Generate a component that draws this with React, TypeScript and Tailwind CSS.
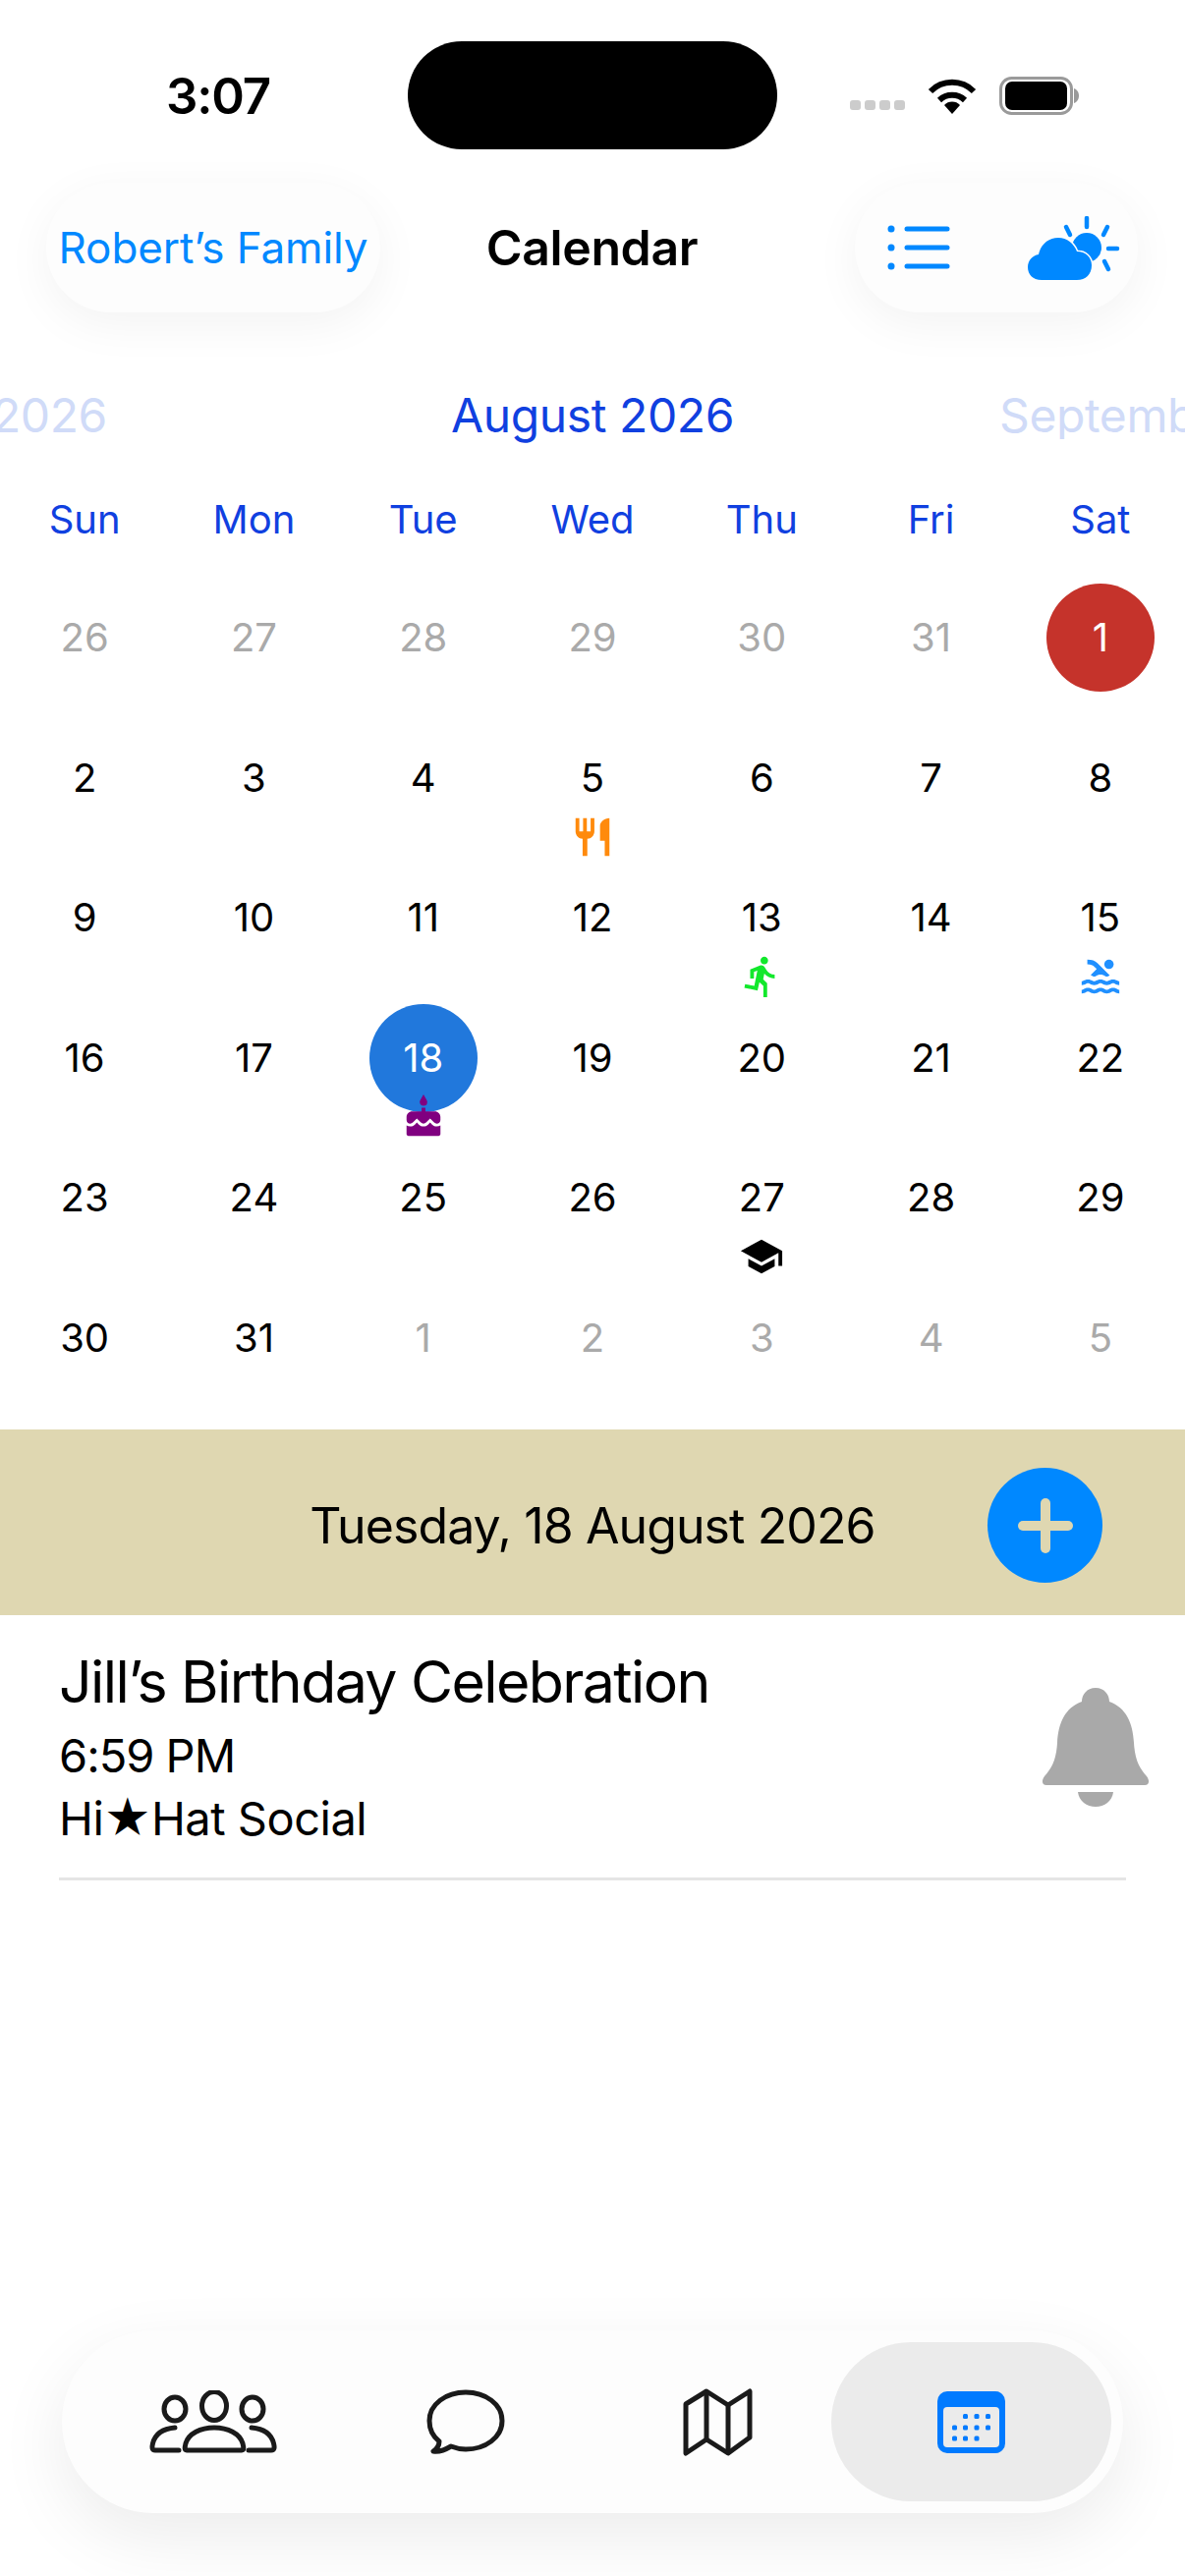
import { MdCake, MdDirectionsRun, MdPool, MdRestaurant, MdSchool } from "react-icons/md";
import type { ReactNode } from "react";

type Day = {
  label: number;
  muted?: boolean;
  circle?: "red" | "blue";
  icon?: ReactNode;
};

const weekdays = ["Sun", "Mon", "Tue", "Wed", "Thu", "Fri", "Sat"];

const days: Day[] = [
  { label: 26, muted: true },
  { label: 27, muted: true },
  { label: 28, muted: true },
  { label: 29, muted: true },
  { label: 30, muted: true },
  { label: 31, muted: true },
  { label: 1, circle: "red" },
  { label: 2 },
  { label: 3 },
  { label: 4 },
  { label: 5, icon: <MdRestaurant className="h-[46px] w-[46px] text-[#ff8a0c]" /> },
  { label: 6 },
  { label: 7 },
  { label: 8 },
  { label: 9 },
  { label: 10 },
  { label: 11 },
  { label: 12 },
  { label: 13, icon: <MdDirectionsRun className="h-[46px] w-[46px] text-[#12e82c]" /> },
  { label: 14 },
  { label: 15, icon: <MdPool className="h-[46px] w-[46px] text-[#2090ff]" /> },
  { label: 16 },
  { label: 17 },
  { label: 18, circle: "blue", icon: <MdCake className="h-[46px] w-[46px] text-[#800080]" /> },
  { label: 19 },
  { label: 20 },
  { label: 21 },
  { label: 22 },
  { label: 23 },
  { label: 24 },
  { label: 25 },
  { label: 26 },
  { label: 27, icon: <MdSchool className="h-[46px] w-[46px] text-black" /> },
  { label: 28 },
  { label: 29 },
  { label: 30 },
  { label: 31 },
  { label: 1, muted: true },
  { label: 2, muted: true },
  { label: 3, muted: true },
  { label: 4, muted: true },
  { label: 5, muted: true },
];

function StatusBar() {
  return (
    <div className="grid h-[110px] grid-cols-[1fr_376px_1fr] items-center mt-[42px]">
      <div className="pl-[169px] text-[51px] font-semibold leading-none tracking-[-1.2px] text-black">3:07</div>
      <div className="h-[110px] rounded-[55px] bg-black" />
      <div className="flex items-center pl-[74px]">
        <div className="mt-[20px] flex gap-[4px]">
          <span className="h-[10px] w-[11px] rounded-[3px] bg-[#cccccc]" />
          <span className="h-[10px] w-[11px] rounded-[3px] bg-[#cccccc]" />
          <span className="h-[10px] w-[11px] rounded-[3px] bg-[#cccccc]" />
          <span className="h-[10px] w-[11px] rounded-[3px] bg-[#cccccc]" />
        </div>
        <svg className="ml-[23px] h-[37px] w-[50px]" viewBox="0 0 50 37" fill="none" stroke="black" strokeWidth="6">
          <path d="M3 14 A 31 31 0 0 1 47 14" />
          <path d="M12 23 A 19 19 0 0 1 38 23" />
          <path d="M25 37 L17 28 A 11 11 0 0 1 33 28 Z" fill="black" stroke="none" />
        </svg>
        <svg className="ml-[23px] h-[39px] w-[81px]" viewBox="0 0 81 39" fill="none">
          <rect x="1.5" y="1.5" width="72" height="36" rx="11" stroke="#9a9a9a" strokeWidth="3" />
          <rect x="6" y="5" width="63" height="29" rx="7" fill="black" />
          <path d="M76 12 C79 13 81 16 81 19.5 C81 23 79 26 76 27 Z" fill="#9a9a9a" />
        </svg>
      </div>
    </div>
  );
}

function Header() {
  return (
    <div className="mt-[34px] grid h-[132px] grid-cols-[1fr_auto_1fr] items-center pl-[47px] pr-[48px]">
      <div className="flex h-[132px] w-[340px] items-center justify-center rounded-[66px] bg-[#fdfdfd] text-[44px] tracking-[-0.1px] text-[#0088ff] shadow-[0_12px_48px_rgba(0,0,0,0.05)]">
        <span className="whitespace-nowrap">Robert’s Family</span>
      </div>
      <div className="text-[50px] font-semibold leading-none tracking-[-0.4px] text-black">Calendar</div>
      <div className="flex h-[132px] w-[288px] items-center justify-self-end rounded-[66px] bg-[#fdfdfd] pl-[33px] shadow-[0_12px_48px_rgba(0,0,0,0.05)]">
        <svg className="h-[46px] w-[64px]" viewBox="0 0 64 46" fill="none" stroke="#0088ff" strokeWidth="5" strokeLinecap="round">
          <path d="M20 4 H61" />
          <path d="M20 23 H61" />
          <path d="M20 42 H61" />
          <circle cx="4" cy="4" r="3.5" fill="#0088ff" stroke="none" />
          <circle cx="4" cy="23" r="3.5" fill="#0088ff" stroke="none" />
          <circle cx="4" cy="42" r="3.5" fill="#0088ff" stroke="none" />
        </svg>
        <svg className="ml-[79px] h-[65px] w-[94px]" viewBox="0 0 94 65" fill="none">
          <circle cx="60" cy="32" r="15" fill="#0088ff" />
          <path
            d="M14 65 C5 65 0 59 0 52 C0 45 5 40 11 39 C13 29 21 22 31 22 C40 22 47 28 50 36 C59 36 65 42 65 50 C65 59 59 65 50 65 Z"
            fill="#0088ff"
            stroke="#fdfdfd"
            strokeWidth="3"
            paintOrder="stroke"
          />
          <g stroke="#0088ff" strokeWidth="4.5" strokeLinecap="round">
            <path d="M60 2 V11" />
            <path d="M39 11 L43 19" />
            <path d="M81 11 L77 19" />
            <path d="M82 33 H91" />
            <path d="M78 46 L82 54" />
          </g>
        </svg>
      </div>
    </div>
  );
}

function MonthStrip() {
  return (
    <div className="mt-[75px] grid h-[60px] grid-cols-[109px_1fr_189px] items-center overflow-hidden text-[48px] leading-none tracking-[-0.4px]">
      <div className="flex justify-end overflow-hidden whitespace-nowrap text-[#d0dbf8]">July 2026</div>
      <div className="pl-[350px] whitespace-nowrap text-[#1040e0]">August 2026</div>
      <div className="overflow-hidden whitespace-nowrap text-[#d0dbf8]">September 2026</div>
    </div>
  );
}

function CalendarGrid() {
  return (
    <>
      <div className="mt-[46px] grid h-[60px] grid-cols-7 items-center text-center text-[40px] leading-none text-[#1040e0]">
        {weekdays.map((name) => (
          <div key={name}>{name}</div>
        ))}
      </div>
      <div className="mt-[35px] grid grid-cols-7 auto-rows-[142.6px]">
        {days.map((day, i) => (
          <div key={i} className="flex flex-col items-center">
            <div
              className={
                day.circle === "red"
                  ? "flex h-[110px] w-[110px] items-center justify-center rounded-full bg-[#c5332b] text-[40px] text-white"
                  : day.circle === "blue"
                    ? "flex h-[110px] w-[110px] items-center justify-center rounded-full bg-[#2178dc] text-[40px] text-white"
                    : day.muted
                      ? "flex h-[110px] w-[110px] items-center justify-center text-[40px] text-[#aaaaaa]"
                      : "flex h-[110px] w-[110px] items-center justify-center text-[40px] text-black"
              }
            >
              {day.label}
            </div>
            {day.icon && <div className="-mt-[18px] h-[46px]">{day.icon}</div>}
          </div>
        ))}
      </div>
    </>
  );
}

function DateBand() {
  return (
    <div className="mt-[5px] grid h-[189px] grid-cols-[1fr_auto_1fr] items-center bg-[#dfd7b1] pt-[7px]">
      <div />
      <div className="text-[50px] leading-none tracking-[-0.9px] text-black">Tuesday, 18 August 2026</div>
      <div className="mr-[84px] flex h-[117px] w-[117px] items-center justify-center justify-self-end rounded-full bg-[#0088ff]">
        <svg className="h-[56px] w-[56px]" viewBox="0 0 56 56" fill="none" stroke="#dfd7b1" strokeWidth="10" strokeLinecap="round">
          <path d="M28 5 V51" />
          <path d="M5 28 H51" />
        </svg>
      </div>
    </div>
  );
}

function EventRow() {
  return (
    <div className="mx-[60px] flex h-[270px] items-start justify-between border-b-[3px] border-[#e5e5e5] pt-[33px]">
      <div className="text-black">
        <div className="text-[59px] leading-[70px] tracking-[-1.6px]">Jill’s Birthday Celebration</div>
        <div className="mt-[10px] text-[47px] leading-[60px] tracking-[-1px]">6:59 PM</div>
        <div className="mt-[4px] text-[47px] leading-[60px] tracking-[-0.5px]">Hi★Hat Social</div>
      </div>
      <svg className="mr-[-24px] mt-[41px] h-[122px] w-[110px]" viewBox="0 0 110 122" fill="#a9a9a9">
        <path d="M55 0 C46 0 41 7 41 14 C24 20 17 36 16 56 C15 74 10 82 3 90 C0 94 0 99 5 99 H105 C110 99 110 94 107 90 C100 82 95 74 94 56 C93 36 86 20 69 14 C69 7 64 0 55 0 Z" />
        <path d="M37 106 H73 C72 115 64 121 55 121 C46 121 38 115 37 106 Z" />
      </svg>
    </div>
  );
}

function TabBar() {
  return (
    <div className="mx-[63px] mb-[64px] mt-auto flex h-[186px] w-[1080px] items-center rounded-[93px] bg-[#fdfdfd] pl-[25px] pr-[12px] shadow-[0_24px_70px_rgba(0,0,0,0.08)]">
      <div className="flex h-full w-[257px] items-center justify-center">
        <svg className="h-[65px] w-[130px]" viewBox="0 0 130 65" fill="none" stroke="#1a1a1a" strokeWidth="5">
          <ellipse cx="26" cy="19" rx="11" ry="12" />
          <ellipse cx="66" cy="16" rx="12.5" ry="14.5" />
          <ellipse cx="105" cy="19" rx="11" ry="12" />
          <path d="M38 61 C35.5 61 36 58 37 54 C40 44 52 38 66 38 C80 38 92 44 95 54 C96 58 96.5 61 94 61 Z" strokeLinejoin="round" />
          <path d="M30 61 H6 C2.5 61 2.5 58 3.5 54 C6 44 14 39 26 38" strokeLinecap="round" />
          <path d="M101 61 H124 C127.5 61 127.5 58 126.5 54 C124 44 116 39 104 38" strokeLinecap="round" />
        </svg>
      </div>
      <div className="flex h-full w-[257px] items-center justify-center">
        <svg className="h-[67px] w-[80px]" viewBox="0 0 80 67" fill="none" stroke="#1a1a1a" strokeWidth="5" strokeLinejoin="round">
          <path d="M40 3 C20 3 3 15 3 32 C3 42 8 49 13 53 C13 57 10 61 7 63 C13 64 20 61 25 58 C30 60 35 61 40 61 C60 61 77 49 77 32 C77 15 60 3 40 3 Z" />
        </svg>
      </div>
      <div className="flex h-full w-[257px] items-center justify-center">
        <svg className="h-[69px] w-[73px]" viewBox="0 0 73 69" fill="none" stroke="#1a1a1a" strokeWidth="5" strokeLinejoin="round">
          <path d="M4 16 L25 3 L47 17 L69 3 V50 L47 66 L25 52 L4 66 Z" />
          <path d="M25 3 V52" />
          <path d="M47 17 V66" />
        </svg>
      </div>
      <div className="-ml-[13px] flex h-[162px] w-[285px] items-center justify-center rounded-[81px] bg-[#ebebeb]">
        <svg className="h-[63px] w-[69px]" viewBox="0 0 69 63">
          <rect width="69" height="63" rx="10" fill="#007aff" />
          <rect x="6" y="16" width="57" height="41" rx="4" fill="#ebebeb" />
          <g fill="#007aff">
            <rect x="26" y="23" width="5" height="5" rx="1.5" />
            <rect x="37.5" y="23" width="5" height="5" rx="1.5" />
            <rect x="49" y="23" width="5" height="5" rx="1.5" />
            <rect x="15" y="34.5" width="5" height="5" rx="1.5" />
            <rect x="26" y="34.5" width="5" height="5" rx="1.5" />
            <rect x="37.5" y="34.5" width="5" height="5" rx="1.5" />
            <rect x="49" y="34.5" width="5" height="5" rx="1.5" />
            <rect x="15" y="45.5" width="5" height="5" rx="1.5" />
            <rect x="26" y="45.5" width="5" height="5" rx="1.5" />
            <rect x="37.5" y="45.5" width="5" height="5" rx="1.5" />
          </g>
        </svg>
      </div>
    </div>
  );
}

export default function App() {
  return (
    <div className="flex h-[2622px] w-[1206px] flex-col overflow-hidden bg-white font-['Inter',sans-serif]">
      <StatusBar />
      <Header />
      <MonthStrip />
      <CalendarGrid />
      <DateBand />
      <EventRow />
      <TabBar />
    </div>
  );
}
